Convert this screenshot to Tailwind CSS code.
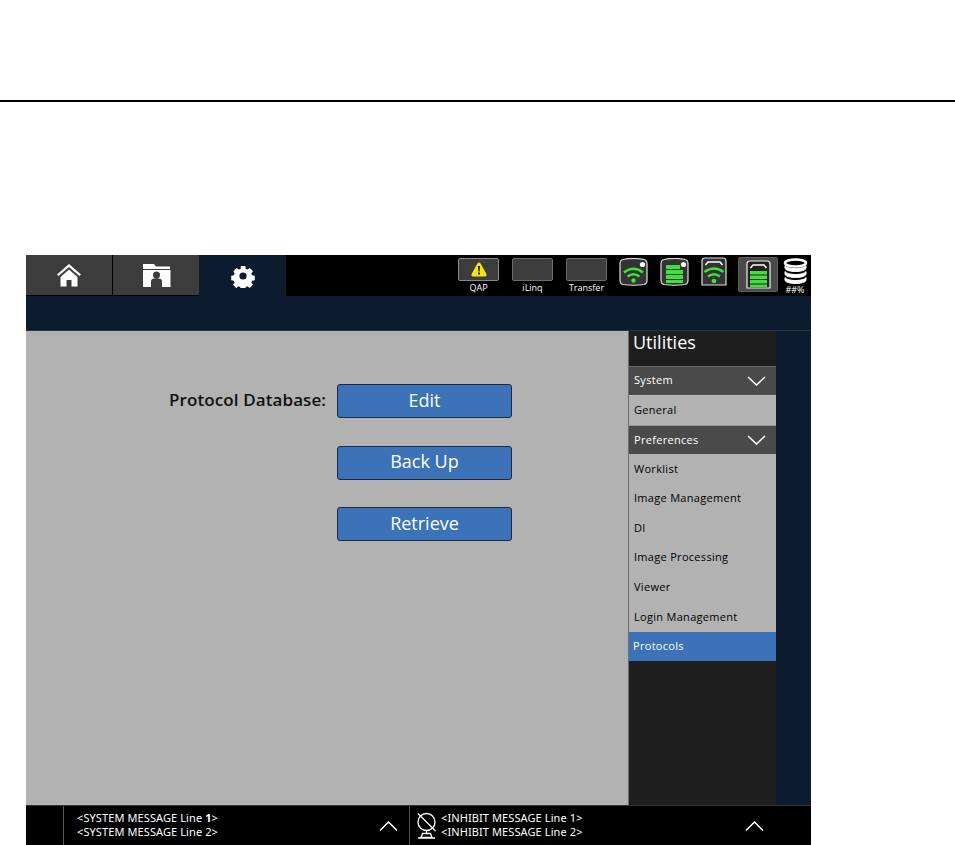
<!DOCTYPE html>
<html><head><meta charset="utf-8">
<script src="https://cdn.jsdelivr.net/npm/@tailwindcss/browser@4"></script>
</head>
<body class="bg-white w-[955px] h-[845px] overflow-hidden font-['Open_Sans','Liberation_Sans',sans-serif]">
<div class="h-[100px]"></div>
<div class="h-[2px] bg-black"></div>
<div class="h-[153px]"></div>
<div class="ml-[26px] w-[785px] h-[590px] flex flex-col bg-[#0d1b2e]">
  <div class="h-[41px] flex bg-black shrink-0">
    <div class="w-[87px] h-[40px] bg-[#3c3c3c] flex items-center justify-center border-r border-black">
      <svg width="26" height="24" viewBox="0 0 26 24" fill="#fff"><path d="M13 1 1 11.500l1.600 1.600L13 4l10.400 9.100 1.600-1.600zM13 6.500 4.500 14v9.500h6V17h5v6.500h6V14z"/></svg>
    </div>
    <div class="w-[86px] h-[40px] bg-[#3c3c3c] flex items-center justify-center">
      <svg width="29" height="23" viewBox="0 0 29 23" fill="#fff"><path d="M1 0h11l2 2.500h14V5H1z"/><path fill-rule="evenodd" d="M1 6h27.500v17H20v-5.500c0-2-1.500-3-3-3h-5c-1.500 0-3 1-3 3V23H1zM14.500 7.500a3.500 3.500 0 1 0 0 7 3.500 3.500 0 0 0 0-7z"/></svg>
    </div>
    <div class="w-[87px] h-[41px] bg-[#0d1b2e] flex items-center justify-center">
      <svg width="24" height="24" viewBox="0 0 24 24" fill="#fff"><path fill-rule="evenodd" d="M9.500 1h5l.6 3.100 1.900.8 2.600-1.800 3.500 3.500-1.800 2.600.8 1.900 3 .6v5l-3 .6-.8 1.900 1.800 2.600-3.500 3.500-2.600-1.800-1.900.8-.6 3h-5l-.6-3-1.900-.8-2.600 1.800-3.500-3.500 1.800-2.600-.8-1.900-3-.6v-5l3-.6.8-1.900L1.400 6.600l3.500-3.500 2.600 1.800 1.900-.8zM12 8a4 4 0 1 0 0 8 4 4 0 0 0 0-8z" transform="translate(1.200 1.200) scale(.9)"/></svg>
    </div>
    <div class="flex-1 flex justify-end">
      <div class="flex items-start pt-[3px] gap-[13px] mr-[12px]">
        <div class="flex flex-col items-center w-[41px]">
          <div class="w-[41px] h-[23px] bg-[#3d3d3d] border border-[#8a8a8a] rounded-[2px] flex items-center justify-center">
            <svg width="16" height="15" viewBox="0 0 16 15"><path d="M8 .5c.7 0 1.200.4 1.600 1l5.800 10.500c.6 1.200 0 2.500-1.400 2.500H2C.6 14.500 0 13.200.6 12L6.400 1.500c.4-.6.900-1 1.600-1z" fill="#f5e512"/><path d="M7 4h2l-.3 5.500H7.300zM7 10.500h2v2H7z" fill="#222"/></svg>
          </div>
          <span class="text-[9px] leading-[10px] mt-[2px] text-white">QAP</span>
        </div>
        <div class="flex flex-col items-center w-[41px]">
          <div class="w-[41px] h-[23px] bg-[#3d3d3d] border border-[#6c6c6c] rounded-[2px]"></div>
          <span class="text-[9px] leading-[10px] mt-[2px] text-white">iLinq</span>
        </div>
        <div class="flex flex-col items-center w-[41px]">
          <div class="w-[41px] h-[23px] bg-[#3d3d3d] border border-[#6c6c6c] rounded-[2px]"></div>
          <span class="text-[9px] leading-[10px] mt-[2px] text-white">Transfer</span>
        </div>
      </div>
      <div class="flex items-start pt-[3px] w-[192px] relative shrink-0">
        <svg class="absolute left-[0px] top-[3px]" width="29" height="28" viewBox="0 0 29 28"><path d="M4 1.500Q14.500 -.5 25 1.500 28 2 28 6v16c0 4-3 4.500-3 4.500Q14.500 28 4 26.500 1 26 1 22V6q0-4 3-4.500z" fill="#333" stroke="#ddd" stroke-width="1.200"/><circle cx="23.500" cy="6.500" r="2.600" fill="#fff"/><g fill="none" stroke="#3fe23a" stroke-width="2.400"><path d="M5 14.500q9.500-7.500 19 0"/><path d="M8.500 18.500q6-4.500 12 0"/></g><circle cx="14.500" cy="22.500" r="2.200" fill="#3fe23a"/></svg>
        <svg class="absolute left-[41px] top-[3px]" width="29" height="28" viewBox="0 0 29 28"><path d="M4 1.500Q14.500 -.5 25 1.500 28 2 28 6v16c0 4-3 4.500-3 4.500Q14.500 28 4 26.500 1 26 1 22V6q0-4 3-4.500z" fill="#333" stroke="#ddd" stroke-width="1.200"/><circle cx="23.500" cy="6.500" r="2.600" fill="#fff"/><path d="M6 7h14v4H6zM6 12h17v4H6zM6 17h17v4H6zM6 22h17v3H6z" fill="#3fe23a"/></svg>
        <svg class="absolute left-[82px] top-[2px]" width="26" height="29" viewBox="0 0 26 29"><path d="M4 1h18q3 0 3 3v24H1V4q0-3 3-3z" fill="#333" stroke="#ddd" stroke-width="1.200"/><path d="M4.500 8 7 5h12l2.500 3" fill="none" stroke="#fff" stroke-width="1.500"/><g fill="none" stroke="#3fe23a" stroke-width="2.400"><path d="M3.500 15q9.500-7 19 0"/><path d="M7 19.500q6-4.500 12 0"/></g><circle cx="13" cy="24" r="2.300" fill="#3fe23a"/></svg>
        <div class="absolute left-[119px] top-[2px] w-[40px] h-[35px] bg-[#4a4a4a] border border-[#5e5e5e] rounded-[2px] flex items-center justify-center">
          <svg width="25" height="29" viewBox="0 0 25 29"><path d="M4 1h17q3 0 3 3v24H1V4q0-3 3-3z" fill="#222" stroke="#eee" stroke-width="1.200"/><path d="M4.500 8 7 5h11l2.500 3" fill="none" stroke="#fff" stroke-width="1.500"/><path d="M4 11h17v3.500H4zM4 15.500h17V19H4zM4 20h17v3.500H4zM4 24.500h17V27H4z" fill="#3fe23a"/></svg>
        </div>
        <div class="absolute left-[163px] top-[3px] w-[26px] flex flex-col items-center">
          <svg width="25" height="28" viewBox="0 0 25 28" fill="none" stroke="#fff"><ellipse cx="12.500" cy="5" rx="10.500" ry="3.500" stroke-width="2.500"/><path d="M2 10.500c2 4 19 4 21 0v-3c-2 4-19 4-21 0z" fill="#fff" stroke-width="1"/><path d="M2 16.500c2 4 19 4 21 0v-3c-2 4-19 4-21 0z" fill="#fff" stroke-width="1"/><path d="M2 22.500c2 4 19 4 21 0v-3c-2 4-19 4-21 0z" fill="#fff" stroke-width="1"/></svg>
          <span class="text-[9px] leading-[9px] text-white -mt-[1px]">##%</span>
        </div>
      </div>
    </div>
  </div>
  <div class="h-[35px] shrink-0 bg-[#0d1b2e] border-b border-[#2a3442]"></div>
  <div class="flex h-[474px] shrink-0">
    <div class="w-[603px] bg-[#b2b2b2] border-r border-[#6e6e6e] shrink-0 pt-[53px] relative">
      <div class="flex items-start ml-[143px] gap-[8px]">
        <div class="w-[160px] h-[32px] flex items-center text-[17px] font-semibold text-[#111] whitespace-nowrap tracking-[0.1px]">Protocol Database:</div>
        <div class="flex flex-col gap-[27.500px] w-[175px]">
          <div class="h-[34px] pb-[2px] bg-[#3b72b8] border border-[#1b2a3d] rounded-[3px] flex items-center justify-center text-white text-[18px] font-medium">Edit</div>
          <div class="h-[34px] pb-[2px] bg-[#3b72b8] border border-[#1b2a3d] rounded-[3px] flex items-center justify-center text-white text-[18px] font-medium">Back Up</div>
          <div class="h-[34px] pb-[2px] bg-[#3b72b8] border border-[#1b2a3d] rounded-[3px] flex items-center justify-center text-white text-[18px] font-medium">Retrieve</div>
        </div>
      </div>
    </div>
    <div class="w-[147px] bg-[#1e1e1e] shrink-0 flex flex-col font-medium tracking-[0.3px]">
      <div class="h-[34.500px] px-[4px] text-white text-[18px] leading-[23px] tracking-normal shrink-0">Utilities</div>
      <div class="h-[29px] border-t border-[#666] bg-[#4a4a4a] flex items-center justify-between pl-[5px] pr-[10px] text-white text-[11px]">System<svg width="19" height="10" viewBox="0 0 19 10" fill="none" stroke="#fff" stroke-width="1.500"><path d="M1 1l8.500 8L18 1"/></svg></div>
      <div class="h-[30px] border-t border-[#bbb] bg-[#b2b2b2] flex items-center px-[5px] text-black text-[11px]">General</div>
      <div class="h-[29.500px] bg-[#4a4a4a] border-t border-[#999] flex items-center justify-between pl-[5px] pr-[10px] text-white text-[11px]">Preferences<svg width="19" height="10" viewBox="0 0 19 10" fill="none" stroke="#fff" stroke-width="1.500"><path d="M1 1l8.500 8L18 1"/></svg></div>
      <div class="h-[29.500px] bg-[#b2b2b2] flex items-center px-[5px] text-black text-[11px]">Worklist</div>
      <div class="h-[29.500px] bg-[#b2b2b2] flex items-center px-[5px] text-black text-[11px]">Image Management</div>
      <div class="h-[29.500px] bg-[#b2b2b2] flex items-center px-[5px] text-black text-[11px]">DI</div>
      <div class="h-[30px] bg-[#b2b2b2] flex items-center px-[5px] text-black text-[11px]">Image Processing</div>
      <div class="h-[29.500px] bg-[#b2b2b2] flex items-center px-[5px] text-black text-[11px]">Viewer</div>
      <div class="h-[29.500px] bg-[#b2b2b2] flex items-center px-[5px] text-black text-[11px]">Login Management</div>
      <div class="h-[29px] bg-[#3b72b8] flex items-center px-[4px] text-white text-[11px]">Protocols</div>
    </div>
    <div class="flex-1 bg-[#0d1b2e]"></div>
  </div>
  <div class="h-[40px] shrink-0 bg-black border-t border-[#333] flex font-['Noto_Sans',sans-serif] text-white text-[11px] leading-[14px] tracking-[0.1px]">
    <div class="w-[38px] border-r border-[#555] shrink-0"></div>
    <div class="w-[346px] shrink-0 border-r border-[#555] flex items-center justify-between pl-[13px] pr-[11px]">
      <div class="pb-[2px]">&lt;SYSTEM MESSAGE Line <b>1</b>&gt;<br>&lt;SYSTEM MESSAGE Line 2&gt;</div>
      <svg width="19" height="10" viewBox="0 0 19 10" fill="none" stroke="#fff" stroke-width="1.500"><path d="M1 9.500 9.500 1 18 9.500"/></svg>
    </div>
    <div class="flex-1 flex items-center justify-between pl-[6px] pr-[47px]">
      <div class="flex items-center gap-[3px]">
        <svg width="22" height="27" viewBox="0 0 22 27" fill="none" stroke="#fff" stroke-width="1.300"><circle cx="10.500" cy="10" r="8.500"/><path d="M2 1.500 19.500 19"/><path d="M10.500 18.500V21M5 25.500l1.500-4h8l1.500 4zM2 26h17"/></svg>
        <div class="pb-[2px]">&lt;INHIBIT MESSAGE Line 1&gt;<br>&lt;INHIBIT MESSAGE Line 2&gt;</div>
      </div>
      <svg width="19" height="10" viewBox="0 0 19 10" fill="none" stroke="#fff" stroke-width="1.500"><path d="M1 9.500 9.500 1 18 9.500"/></svg>
    </div>
  </div>
</div>
</body></html>
